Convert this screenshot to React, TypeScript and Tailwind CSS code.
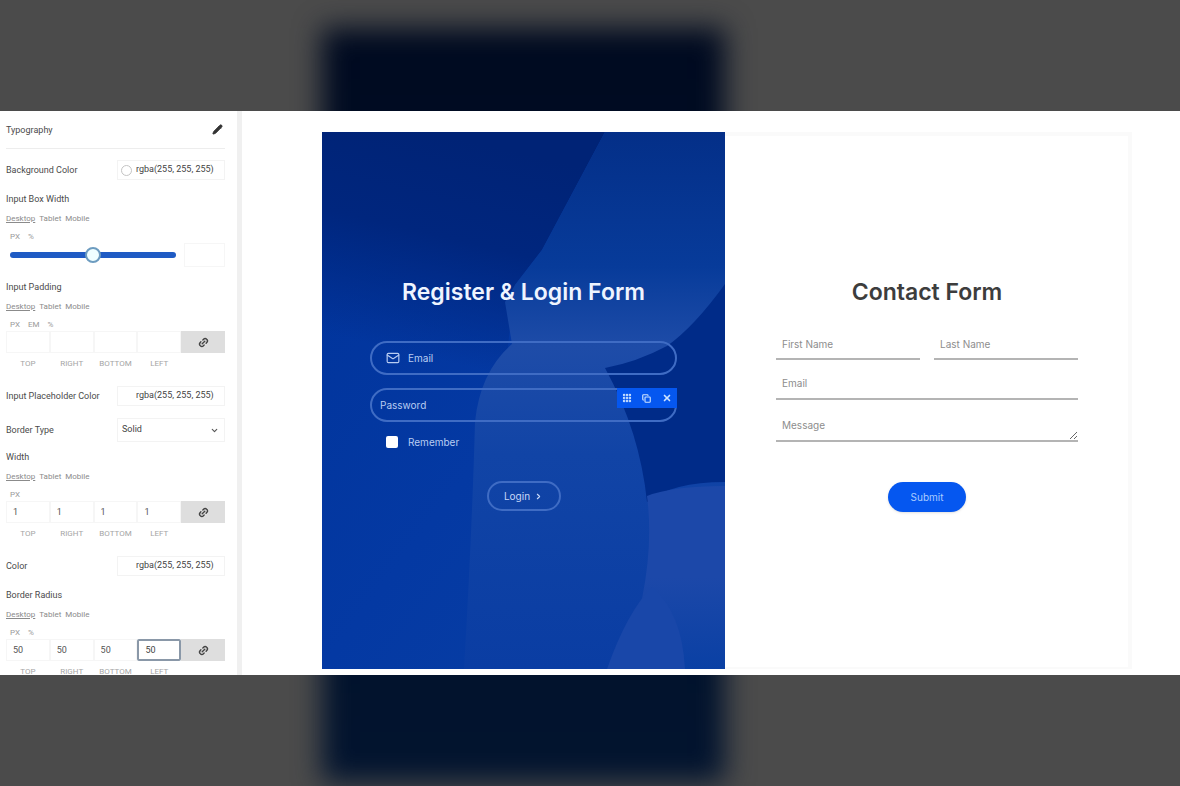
import { Pencil, Link2, Mail, ChevronDown, Grip, Copy, X, ChevronRight } from "lucide-react";

const labelText = "text-[9px] leading-4 text-[#4b4b4b]";

function Devices() {
  return (
    <div className="flex h-6 items-center gap-1 text-[8px] text-[#8b8b8b]">
      <button type="button" className="underline">Desktop</button>
      <button type="button">Tablet</button>
      <button type="button">Mobile</button>
    </div>
  );
}

function Units({ units }: { units: string[] }) {
  return (
    <div className="flex h-3 items-center gap-2 pl-1 text-[8px] text-[#9a9a9a]">
      {units.map((unit) => (
        <button type="button" key={unit}>{unit}</button>
      ))}
    </div>
  );
}

function ColorRow({ label, id, swatch }: { label: string; id: string; swatch?: boolean }) {
  return (
    <div className="flex h-[34px] items-center justify-between">
      <label htmlFor={id} className={labelText}>{label}</label>
      <div className="flex h-5 w-[108px] items-center gap-1 border border-[#f3f3f3] pl-[3px]">
        <span className={swatch ? "size-[11px] rounded-full border border-[#c4c4c4]" : "size-[11px]"} />
        <input id={id} defaultValue="rgba(255, 255, 255)" className="w-[86px] min-w-0 bg-transparent text-[9px] text-[#444] outline-none" />
      </div>
    </div>
  );
}

function Sides({ name, units, values, focused }: { name: string; units: string[]; values: string[]; focused?: boolean }) {
  const sides = ["TOP", "RIGHT", "BOTTOM", "LEFT"];
  return (
    <fieldset>
      <legend className={labelText}>{name}</legend>
      <Devices />
      <Units units={units} />
      <div className="grid grid-cols-5">
        {sides.map((side, i) => (
          <label key={side} className="text-center text-[8px] text-[#a5a5a5]">
            <input
              defaultValue={values[i]}
              className={
                focused && i === 3
                  ? "block h-[22px] w-full rounded-xs border-2 border-[#8a98a8] pl-1.5 text-[9px] text-[#444] outline-none"
                  : "block h-[22px] w-full border border-[#f6f6f6] pl-1.5 text-[9px] text-[#555] outline-none"
              }
            />
            <span className="block h-[22px] leading-[22px]">{side}</span>
          </label>
        ))}
        <button type="button" aria-label="Link values" className="flex h-[22px] items-center justify-center bg-[#dedede] text-[#444]">
          <Link2 size={11} strokeWidth={3} className="-rotate-45" />
        </button>
      </div>
    </fieldset>
  );
}

function Sidebar() {
  return (
    <aside className="w-[242px] shrink-0 overflow-hidden border-r-[5px] border-[#f0f0f0] pr-3 pl-1.5 font-['Roboto','Liberation_Sans',sans-serif]">
      <div className="flex h-[38px] items-center justify-between border-b border-[#ededed]">
        <span className={labelText}>Typography</span>
        <button type="button" aria-label="Edit typography" className="pr-0.5 text-[#333]">
          <Pencil size={11} fill="currentColor" />
        </button>
      </div>
      <div className="py-1">
        <ColorRow label="Background Color" id="bg-color" swatch />
      </div>
      <label htmlFor="box-width" className={`block ${labelText}`}>Input Box Width</label>
      <Devices />
      <Units units={["PX", "%"]} />
      <div className="flex h-6 items-center gap-2">
        <input
          id="box-width"
          type="range"
          defaultValue={50}
          className="ml-1 h-1.5 w-[166px] appearance-none rounded-full bg-[#1f5bc4] [&::-webkit-slider-thumb]:size-4 [&::-webkit-slider-thumb]:appearance-none [&::-webkit-slider-thumb]:rounded-full [&::-webkit-slider-thumb]:border-2 [&::-webkit-slider-thumb]:border-[#6d9cc0] [&::-webkit-slider-thumb]:bg-[#f0ffff]"
        />
        <input aria-label="Input box width value" className="h-6 min-w-0 flex-1 border border-[#f6f6f6]" />
      </div>
      <div className="mt-3">
        <Sides name="Input Padding" units={["PX", "EM", "%"]} values={["", "", "", ""]} />
      </div>
      <div className="mt-1">
        <ColorRow label="Input Placeholder Color" id="placeholder-color" />
      </div>
      <div className="flex h-[34px] items-center justify-between">
        <label htmlFor="border-type" className={labelText}>Border Type</label>
        <div className="relative w-[108px]">
          <select id="border-type" className="block h-6 w-full appearance-none border border-[#f3f3f3] bg-white pl-1 text-[9px] text-[#444]">
            <option>Solid</option>
          </select>
          <ChevronDown size={9} strokeWidth={3} className="pointer-events-none absolute top-2 right-1.5 text-[#555]" />
        </div>
      </div>
      <div className="mt-0.5">
        <Sides name="Width" units={["PX"]} values={["1", "1", "1", "1"]} />
      </div>
      <div className="mt-1">
        <ColorRow label="Color" id="border-color" />
      </div>
      <div className="mt-1">
        <Sides name="Border Radius" units={["PX", "%"]} values={["50", "50", "50", "50"]} focused />
      </div>
    </aside>
  );
}

function Backdrop() {
  return (
    <svg className="absolute inset-0 size-full" viewBox="0 0 403 537" preserveAspectRatio="none" aria-hidden="true">
      <defs>
        <linearGradient id="base" x1="0" y1="0" x2="1" y2="1">
          <stop offset="0" stopColor="#00339a" />
          <stop offset="0.5" stopColor="#0439a3" />
          <stop offset="1" stopColor="#0a40a4" />
        </linearGradient>
        <linearGradient id="shade" gradientUnits="userSpaceOnUse" x1="110" y1="0" x2="60" y2="215">
          <stop offset="0" stopColor="#002376" />
          <stop offset="0.45" stopColor="#00267e" />
          <stop offset="1" stopColor="#00267e" stopOpacity="0" />
        </linearGradient>
        <linearGradient id="fold" x1="0" y1="0" x2="0" y2="1">
          <stop offset="0" stopColor="#042f88" />
          <stop offset="0.25" stopColor="#073b9a" />
          <stop offset="0.4" stopColor="#1e4ca8" />
          <stop offset="0.6" stopColor="#1144a6" />
          <stop offset="1" stopColor="#0a3da3" />
        </linearGradient>
        <linearGradient id="petal" x1="0" y1="0" x2="0" y2="1">
          <stop offset="0" stopColor="#1c48a9" />
          <stop offset="0.5" stopColor="#1c48a9" />
          <stop offset="1" stopColor="#0a40a4" />
        </linearGradient>
      </defs>
      <path d="M0 0H403V537H0Z" fill="url(#base)" />
      <path d="M0 0H283L220 118L193 153L183 240L0 240Z" fill="url(#shade)" />
      <path d="M283 0H403V537H142Q150 400 153 290Q158 240 190 212L183 170L193 153L220 118Z" fill="url(#fold)" />
      <path d="M403 152Q372 195 345 214Q315 230 283 236Q318 300 325 370Q350 350 403 350Z" fill="#002b88" />
      <path d="M325 364Q350 354 403 354V537H300Q335 440 325 364Z" fill="url(#petal)" />
      <path d="M285 537Q305 480 330 455Q360 480 363 537Z" fill="#1947a9" />
    </svg>
  );
}

const pill = "block h-[34px] w-full rounded-full border-2 border-[#3f6cc4] bg-transparent text-[10px] text-white outline-none placeholder:text-[#b9cdf2]";

function LoginForm() {
  return (
    <section className="relative px-12 pt-[146px]">
      <Backdrop />
      <form className="relative">
        <h2 className="text-center text-[23px] leading-7 font-semibold text-[#eef4ff]">Register &amp; Login Form</h2>
        <div className="relative mt-[35px]">
          <Mail size={14} className="absolute top-2.5 left-4 text-[#b9cdf2]" />
          <input type="email" aria-label="Email" placeholder="Email" className={`${pill} pl-9`} />
        </div>
        <div className="relative mt-[13px]">
          <input type="password" aria-label="Password" placeholder="Password" className={`${pill} pl-2`} />
          <div className="absolute top-0 right-0 flex h-5 w-[60px] items-center justify-around bg-[#0557f0] text-[#cfe4ff]">
            <button type="button" aria-label="Move"><Grip size={10} strokeWidth={4} /></button>
            <button type="button" aria-label="Duplicate"><Copy size={9} strokeWidth={3} /></button>
            <button type="button" aria-label="Remove"><X size={10} strokeWidth={4} /></button>
          </div>
        </div>
        <label className="mt-3 flex h-4 items-center gap-2.5 pl-4 text-[10px] text-[#b9cdf2]">
          <input type="checkbox" className="size-3 appearance-none rounded-xs bg-white" />
          Remember
        </label>
        <button type="button" className="mx-auto mt-[31px] flex h-[30px] w-[74px] items-center justify-center gap-1 rounded-full border-2 border-[#3f6cc4] text-[10px] text-[#c8d8f7]">
          Login <ChevronRight size={9} strokeWidth={3} />
        </button>
      </form>
    </section>
  );
}

const line = "block w-full border-b-2 border-[#b4b4b4] bg-transparent pl-1.5 text-[10px] text-[#555] outline-none placeholder:text-[#8d8d8d]";

function ContactForm() {
  return (
    <section className="border-t-4 border-r-4 border-b-2 border-[#fafafa] pt-[142px] pr-[50px] pl-[51px]">
      <form>
        <h2 className="text-center text-[23px] leading-7 font-semibold text-[#3d3d3d]">Contact Form</h2>
        <div className="mt-6 grid grid-cols-2 gap-3.5">
          <input aria-label="First Name" placeholder="First Name" className={`${line} h-[30px]`} />
          <input aria-label="Last Name" placeholder="Last Name" className={`${line} h-[30px]`} />
        </div>
        <input type="email" aria-label="Email" placeholder="Email" className={`${line} mt-2 h-8`} />
        <textarea aria-label="Message" placeholder="Message" className={`${line} mt-2 h-[34px] pt-2.5`} />
        <button type="button" className="mx-auto mt-10 block h-[30px] w-[78px] rounded-full bg-[#0557f0] text-[10px] text-[#a9ccff] shadow-sm">Submit</button>
      </form>
    </section>
  );
}

export default function App() {
  return (
    <div className="relative flex h-screen flex-col overflow-hidden bg-[#4b4b4b] py-[111px] font-['Inter','Liberation_Sans',sans-serif]">
      <div className="absolute top-7 bottom-1 left-[322px] w-[403px] bg-linear-to-b from-[#000a20] to-[#02142f] blur-[14px]" />
      <main className="relative flex min-h-0 flex-1 overflow-hidden bg-white">
        <Sidebar />
        <div className="flex min-w-0 flex-1 pt-[21px] pr-12 pb-1.5 pl-20">
          <div className="grid flex-1 grid-cols-[403fr_407fr]">
            <LoginForm />
            <ContactForm />
          </div>
        </div>
      </main>
    </div>
  );
}
